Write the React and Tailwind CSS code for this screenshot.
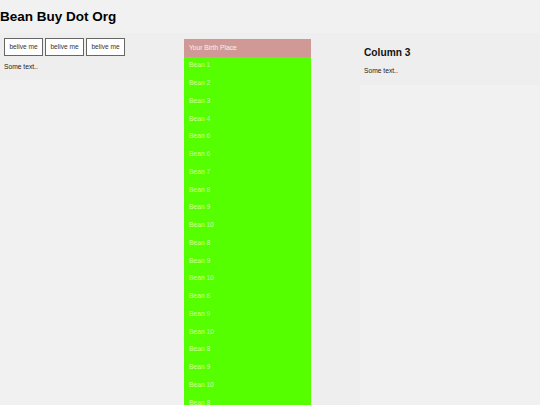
import React from 'react';

const beans = [1, 2, 3, 4, 6, 6, 7, 8, 9, 10, 8, 9, 10, 8, 9, 10, 8, 9, 10, 8];

const App = () => {
  return (
    <div className="min-h-screen h-[405px] overflow-hidden bg-[#f1f1f1] text-black" style={{ fontFamily: '"Liberation Sans", Arial, sans-serif' }}>
      <header className="h-[33px] flex items-center">
        <h1 className="text-[13.5px] font-bold leading-none">Bean Buy Dot Org</h1>
      </header>

      <div className="flex items-start h-[372px]">
        {/* column 1 */}
        <section className="w-[184px] h-[47px] bg-[#eeeeee] pt-[5px] px-[4px]">
          <div className="flex gap-[2px]">
            {['belive me', 'belive me', 'belive me'].map((label, i) => (
              <button
                key={i}
                className="h-[18px] w-[39px] bg-white border border-[#666] text-[6.6px] text-[#333] leading-none"
              >
                {label}
              </button>
            ))}
          </div>
          <p className="mt-[8px] text-[6.7px] leading-none text-[#222]">Some text..</p>
        </section>

        {/* column 2 */}
        <section className="w-[176px] self-stretch bg-[#eeeeee] pt-[6px]">
          <ul className="w-[127px] text-[6.7px] leading-none">
            <li className="h-[17.75px] flex items-center px-[5px] bg-[#d09995] text-white/85">Your Birth Place</li>
            {beans.map((n, i) => (
              <li key={i} className="h-[17.75px] flex items-center px-[5px] bg-[#55ff00] text-white/70">
                Bean {n}
              </li>
            ))}
          </ul>
        </section>

        {/* column 3 */}
        <section className="flex-1 h-[52px] bg-[#eeeeee] px-[4px] pt-[15px]">
          <h2 className="text-[10.2px] font-bold leading-none text-[#111]">Column 3</h2>
          <p className="mt-[10px] text-[6.7px] leading-none text-[#222]">Some text..</p>
        </section>
      </div>
    </div>
  );
};

export default App;
